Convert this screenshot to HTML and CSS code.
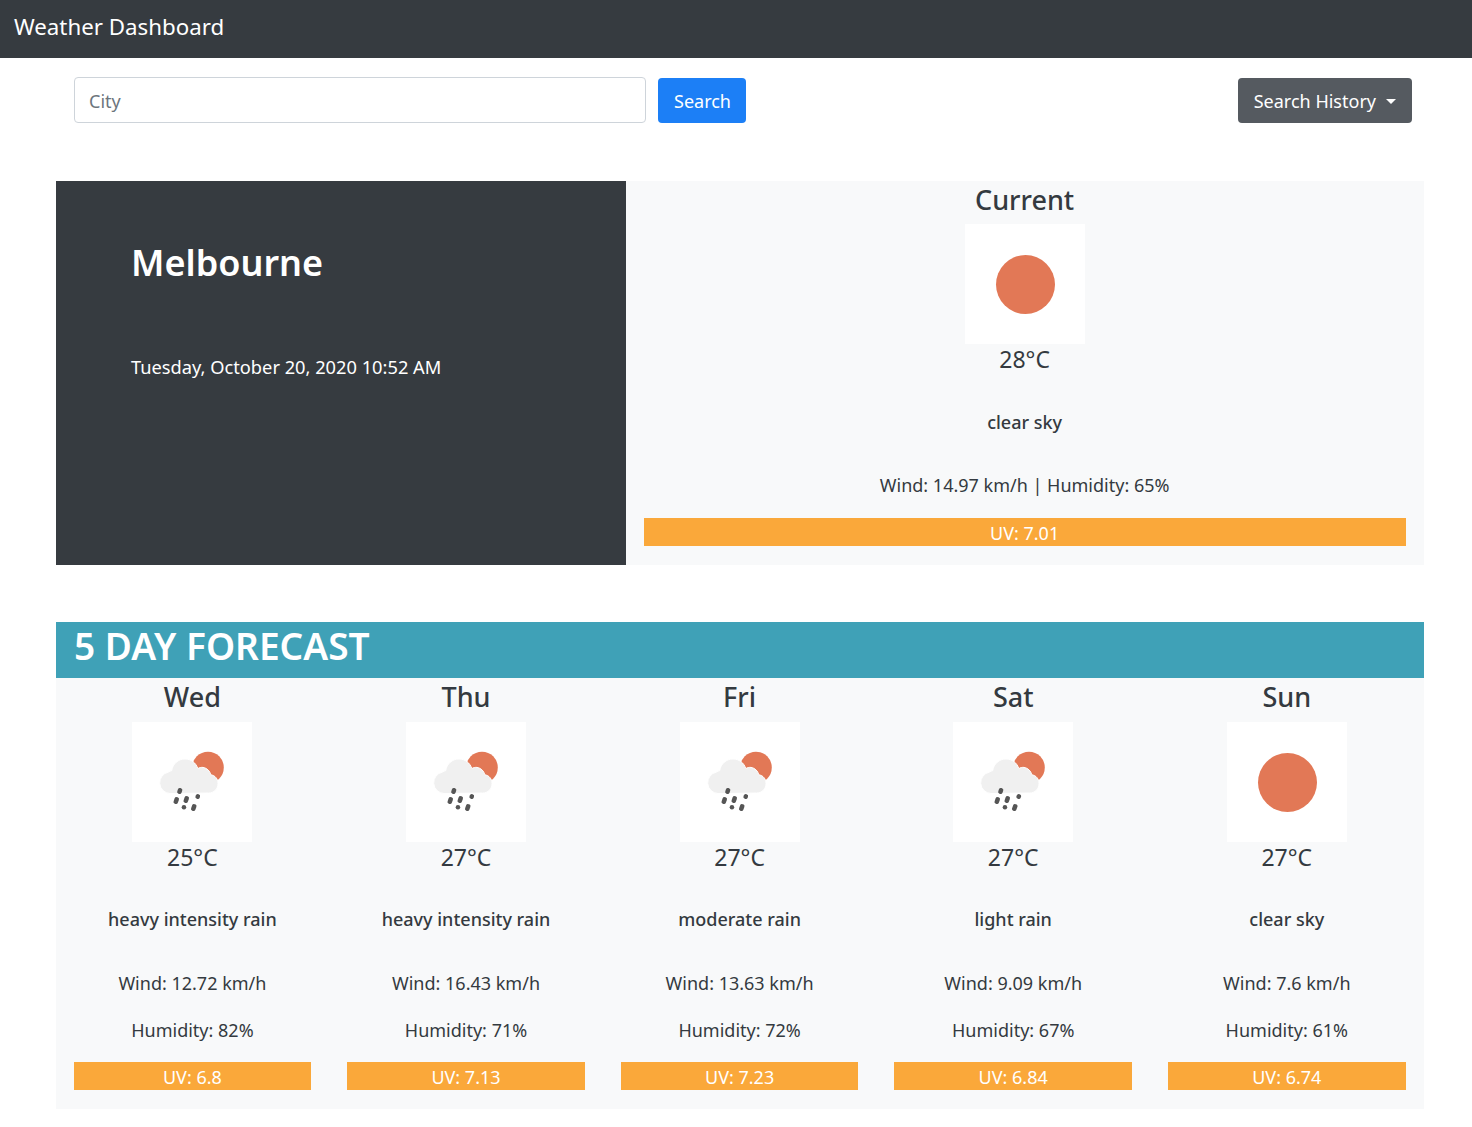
FILE: index.html

```html
<!DOCTYPE html>
<html>
<head>
  <meta charset="utf-8">
  <title>Weather Dashboard</title>
  <link rel="stylesheet" href="styles.css">
</head>
<body>
  <svg class="defs" width="0" height="0">
    <symbol id="icon-clear" viewBox="0 0 120 120">
      <circle cx="60.5" cy="60.5" r="29.5" fill="#e27856"/>
    </symbol>
    <symbol id="icon-rain" viewBox="0 0 120 120">
      <circle cx="76" cy="45.5" r="15.8" fill="#e27856"/>
      <path class="cloud" d="M38 71.5a10.8 10.8 0 0 1-1.500-21.400c1-.8 2-1.200 3.300-1.500 .8-6.700 6.500-11.600 13.200-11.600 6 0 11.200 4 12.800 9.600 1.600-1 3.400-1.400 5.200-1.200 4 .6 7 3.600 7.800 7.400 4.400 .6 7.200 4.200 7.200 8.600 0 5.400-4 9.600-9.400 9.600z"/>
      <g fill="#555">
        <rect x="45.500" y="66" width="4.500" height="6" rx="2" transform="rotate(20 47.700 69)"/>
        <rect x="42" y="75" width="4.500" height="7" rx="2" transform="rotate(20 44.200 78.500)"/>
        <rect x="52" y="74" width="4.500" height="7" rx="2" transform="rotate(20 54.200 77.500)"/>
        <rect x="63.500" y="72" width="4.500" height="5" rx="2.200" transform="rotate(20 65.700 74.500)"/>
        <rect x="49.700" y="83" width="4.500" height="4.500" rx="2.200"/>
        <rect x="59.500" y="82" width="4.500" height="7" rx="2" transform="rotate(20 61.700 85.500)"/>
      </g>
    </symbol>
  </svg>

  <nav class="navbar"><span class="brand">Weather Dashboard</span></nav>

  <div class="toolbar">
    <form class="search-form">
      <input class="city-input" type="text" placeholder="City">
      <button class="btn btn-search" type="button">Search</button>
    </form>
    <button class="btn btn-history" type="button">Search History<span class="caret"></span></button>
  </div>

  <main class="container">
    <section class="current">
      <div class="location">
        <h1>Melbourne</h1>
        <p>Tuesday, October 20, 2020 10:52 AM</p>
      </div>
      <div class="weather weather-now">
        <h3>Current</h3>
        <svg class="icon"><use href="#icon-clear"/></svg>
        <h4>28°C</h4>
        <h5>clear sky</h5>
        <p class="stat">Wind: 14.97 km/h | Humidity: 65%</p>
        <div class="uv">UV: 7.01</div>
      </div>
    </section>

    <h2 class="forecast-title">5 DAY FORECAST</h2>
    <section class="forecast">
      <div class="weather">
        <h3>Wed</h3>
        <svg class="icon"><use href="#icon-rain"/></svg>
        <h4>25°C</h4>
        <h5>heavy intensity rain</h5>
        <p class="stat">Wind: 12.72 km/h</p>
        <p class="stat">Humidity: 82%</p>
        <div class="uv">UV: 6.8</div>
      </div>
      <div class="weather">
        <h3>Thu</h3>
        <svg class="icon"><use href="#icon-rain"/></svg>
        <h4>27°C</h4>
        <h5>heavy intensity rain</h5>
        <p class="stat">Wind: 16.43 km/h</p>
        <p class="stat">Humidity: 71%</p>
        <div class="uv">UV: 7.13</div>
      </div>
      <div class="weather">
        <h3>Fri</h3>
        <svg class="icon"><use href="#icon-rain"/></svg>
        <h4>27°C</h4>
        <h5>moderate rain</h5>
        <p class="stat">Wind: 13.63 km/h</p>
        <p class="stat">Humidity: 72%</p>
        <div class="uv">UV: 7.23</div>
      </div>
      <div class="weather">
        <h3>Sat</h3>
        <svg class="icon"><use href="#icon-rain"/></svg>
        <h4>27°C</h4>
        <h5>light rain</h5>
        <p class="stat">Wind: 9.09 km/h</p>
        <p class="stat">Humidity: 67%</p>
        <div class="uv">UV: 6.84</div>
      </div>
      <div class="weather">
        <h3>Sun</h3>
        <svg class="icon"><use href="#icon-clear"/></svg>
        <h4>27°C</h4>
        <h5>clear sky</h5>
        <p class="stat">Wind: 7.6 km/h</p>
        <p class="stat">Humidity: 61%</p>
        <div class="uv">UV: 6.74</div>
      </div>
    </section>
  </main>
</body>
</html>
```

FILE: styles.css

```css
* {
  box-sizing: border-box;
}

body {
  margin: 0;
  font-family: "Noto Sans", "Open Sans", sans-serif;
  font-size: 18px;
  line-height: 1.5;
  color: #343a40;
  background: #fff;
}

.defs {
  display: block;
  height: 0;
}

.cloud {
  fill: #f0f0f0;
  stroke: #fff;
  stroke-width: 1;
}

.navbar {
  height: 58px;
  padding: 0 14px 5px;
  display: flex;
  align-items: center;
  color: #fff;
  background: #363b40;
}

.brand {
  font-size: 22.3px;
}

.toolbar {
  display: flex;
  justify-content: space-between;
  align-items: flex-end;
  height: 65px;
  padding: 0 60px 0 74px;
}

.search-form {
  display: flex;
  align-items: flex-end;
  gap: 12px;
}

.city-input {
  width: 572px;
  height: 46px;
  padding: 2px 14px 0;
  font: inherit;
  color: #495057;
  border: 1px solid #ced4da;
  border-radius: 4px;
}

.city-input::placeholder {
  color: #6c757d;
}

.btn {
  height: 45px;
  padding: 2px 15px 0 16px;
  font: inherit;
  color: #fff;
  border: 0;
  border-radius: 4px;
}

.btn-search {
  background: #1c7ff6;
}

.btn-history {
  display: flex;
  align-items: center;
  padding: 2px 16px 0;
  background: #555a60;
}

.caret {
  width: 0;
  height: 0;
  margin-left: 10px;
  border-top: 5px solid #fff;
  border-left: 5.5px solid transparent;
  border-right: 5.5px solid transparent;
}

.container {
  width: 1368px;
  margin: 58px 0 0 56px;
}

.current {
  display: grid;
  grid-template-columns: 570px 1fr;
  height: 384px;
  background: #f8f9fa;
}

.location {
  padding: 60px 20px 0 75px;
  color: #fff;
  background: #363b40;
}

.location h1 {
  margin: 0 0 69px;
  font-size: 36px;
  font-weight: 600;
  line-height: 1.2;
}

.location p {
  margin: 0;
  font-size: 18.25px;
}

.weather {
  display: flex;
  flex-direction: column;
  align-items: center;
  padding: 0 18.4px 0 17.6px;
  text-align: center;
}

.weather h3 {
  margin: 0 0 7px;
  padding-top: 1px;
  font-size: 27px;
  font-weight: 500;
  line-height: 36px;
}

.icon {
  display: block;
  width: 120px;
  height: 120px;
  background: #fff;
}

.weather h4 {
  margin: 0 0 33px;
  font-size: 23px;
  font-weight: 400;
  line-height: 30px;
}

.weather h5 {
  margin: 0 0 36px;
  font-size: 18px;
  font-weight: 500;
  line-height: 28px;
}

.stat {
  margin: 0 0 19px;
  line-height: 28px;
}

.weather-now h3 {
  margin-bottom: 6px;
}

.weather-now h4 {
  margin-bottom: 34px;
}

.weather-now h5 {
  margin-bottom: 35px;
}

.weather-now .stat {
  margin-bottom: 20px;
}

.uv {
  align-self: stretch;
  height: 28px;
  margin-top: -1px;
  line-height: 31px;
  color: #fff;
  background: #faa83a;
}

.forecast-title {
  height: 56px;
  margin: 57px 0 0;
  padding-left: 18px;
  font-size: 37.1px;
  font-weight: 600;
  line-height: 48px;
  color: #fff;
  background: #3fa1b7;
}

.forecast {
  display: grid;
  grid-template-columns: repeat(5, 1fr);
  height: 431px;
  background: #f8f9fa;
}
```
